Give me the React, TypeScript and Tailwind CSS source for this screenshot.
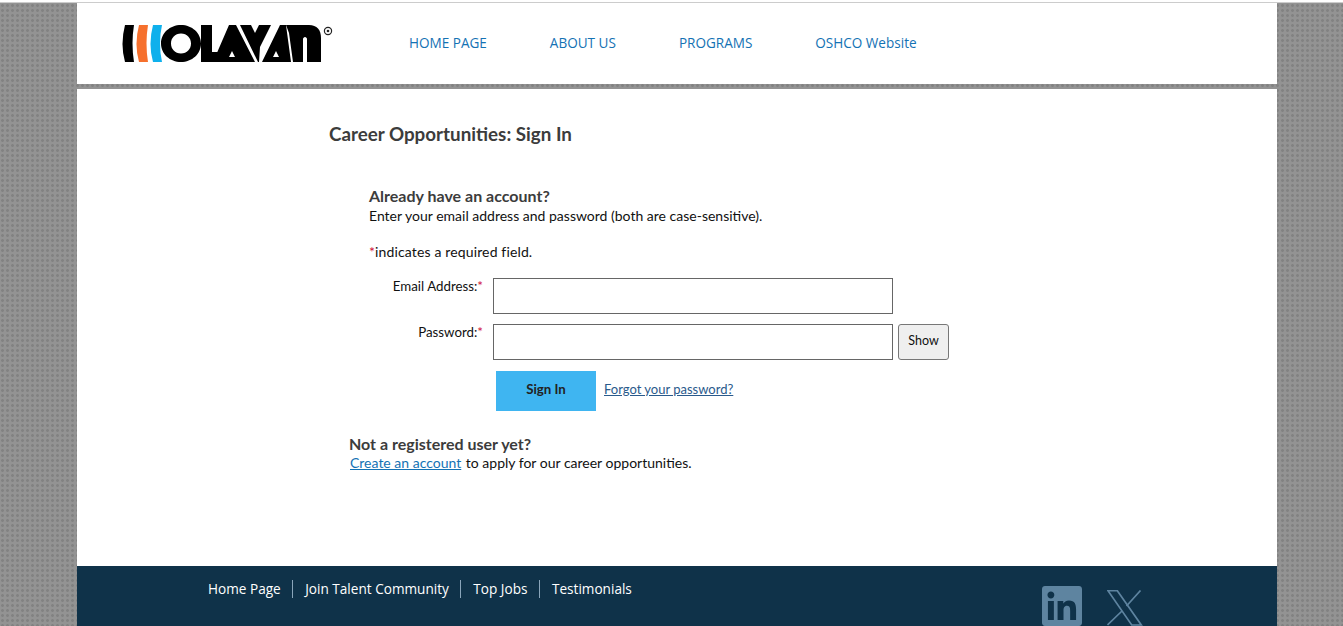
const pattern = "bg-[#939393] bg-[radial-gradient(#828282_1.2px,transparent_1.6px)] bg-[length:5px_5px]"

const navLinks = ["HOME PAGE", "ABOUT US", "PROGRAMS", "OSHCO Website"]
const footerLinks = ["Home Page", "Join Talent Community", "Top Jobs", "Testimonials"]

function Logo() {
  return (
    <svg width="215" height="40" viewBox="120 24 215 40" className="shrink-0">
      <path d="M125 25h9q-3 18 0 37h-9q-5-18 0-37z" fill="#000" />
      <path d="M139 25h9q-3 18 0 37h-9q-5-18 0-37z" fill="#f6702d" />
      <path d="M153 25h9q-4 18 0 37h-9q-5-18 0-37z" fill="#0fb0ec" />
      <path
        fillRule="evenodd"
        d="M181 25c11 0 20 8 20 18.500s-9 18.500-20 18.500-20-8-20-18.500 9-18.500 20-18.500zm0 8.500c-6 0-10 4.500-10 10s4 10 10 10 10-4.500 10-10-4-10-10-10z"
        fill="#000"
      />
      <path d="M201 25h11v27h12l-5 10h-18z" fill="#000" />
      <path fillRule="evenodd" d="M213 62l16-37h7l19 37zM229 57h6l-3-6z" fill="#000" />
      <path d="M240 25h11l4 8 4-8h12l-11 22-1 15h-1z" fill="#000" />
      <path fillRule="evenodd" d="M262 62l18-37h6l5 37zM273 57h6l-3-6z" fill="#000" />
      <path d="M286 25h23c8 0 12 5 12 13v24h-14v-23c0-1-1-2-2-2s-2 1-2 2v23h-10l-4-29z" fill="#000" />
      <circle cx="328" cy="31" r="3.600" fill="none" stroke="#222" strokeWidth="1.200" />
      <circle cx="328" cy="31" r="1.300" fill="#222" />
    </svg>
  )
}

function LinkedinIcon() {
  return (
    <svg width="40" height="40" viewBox="0 0 24 24" fill="#5e84a0">
      <path d="M20.447 20.452h-3.554v-5.569c0-1.328-.027-3.037-1.852-3.037-1.853 0-2.136 1.445-2.136 2.939v5.667H9.351V9h3.414v1.561h.046c.477-.9 1.637-1.85 3.37-1.85 3.601 0 4.267 2.37 4.267 5.455v6.286zM5.337 7.433c-1.144 0-2.063-.926-2.063-2.065 0-1.138.92-2.063 2.063-2.063 1.14 0 2.064.925 2.064 2.063 0 1.139-.925 2.065-2.064 2.065zm1.782 13.019H3.555V9h3.564v11.452zM22.225 0H1.771C.792 0 0 .774 0 1.729v20.542C0 23.227.792 24 1.771 24h20.451C23.2 24 24 23.227 24 22.271V1.729C24 .774 23.2 0 22.222 0h.003z" />
    </svg>
  )
}

function XIcon() {
  return (
    <svg width="36" height="36" viewBox="0 0 36 36" fill="none" stroke="#5e84a0" strokeWidth="1.700" className="mt-1">
      <path d="M1 .7h9.300l24 34.300h-9.600z" />
      <path d="M33.500.5L19.500 16M15 21L.5 35" />
    </svg>
  )
}

export default function App() {
  return (
    <div className={`h-screen overflow-hidden pt-[2px] bg-white font-['Noto_Sans',sans-serif]`}>
      <div className={`h-full border-t border-[#cccccc] ${pattern}`}>
        <div className="ml-[77px] w-[1200px]">
          <header className="h-[81px] bg-white flex items-center pl-[43px]">
            <Logo />
            <nav className="ml-[74px] flex gap-[63px] font-['Open_Sans',sans-serif] text-[13.550px] -mt-[1px] text-[#1472b4]">
              {navLinks.map((l) => (
                <a key={l} href="#">{l}</a>
              ))}
            </nav>
          </header>

          <main className="mt-[5px] h-[477px] bg-white pl-[252px] pt-[33px] text-[14px] text-[#111] font-['Lato',sans-serif]">
            <h1 className="text-[18.800px] font-bold leading-6 text-[#3c3c3c]">Career Opportunities: Sign In</h1>

            <div className="ml-[40px] mt-[40px]">
              <h2 className="text-[16px] font-bold leading-5 text-[#3c3c3c]">Already have an account?</h2>
              <p className="leading-5">Enter your email address and password (both are case-sensitive).</p>
              <p className="mt-4 leading-5 tracking-[0.01em]"><span className="text-[#d0103a]">*</span>indicates a required field.</p>
            </div>

            <div className="mt-[16px]">
              <div className="flex">
                <label className="w-[154px] text-right text-[13.300px] leading-[16px]">Email Address:<span className="text-[#d0103a]">*</span></label>
                <input className="ml-[10px] h-[36px] w-[400px] border border-[#666] bg-white" />
              </div>
              <div className="flex mt-[10px]">
                <label className="w-[154px] text-right text-[13.300px] leading-[16px]">Password:<span className="text-[#d0103a]">*</span></label>
                <input type="password" className="ml-[10px] h-[36px] w-[400px] border border-[#666] bg-white" />
                <button className="ml-[5px] w-[51px] h-[36px] rounded-[3px] border border-[#777] bg-[#efefef] text-[12.500px] pb-[2px]">Show</button>
              </div>
              <div className="flex items-center mt-[11px] ml-[167px]">
                <button className="w-[100px] h-[40px] bg-[#3fb5f1] text-[13.300px] font-bold text-[#222] pb-[2px]">Sign In</button>
                <a href="#" className="ml-[8px] -mt-[2px] underline text-[13px] text-[#2a5a8c]">Forgot your password?</a>
              </div>
            </div>

            <div className="ml-[20px] mt-[23px]">
              <h2 className="text-[16px] font-bold leading-[19px] text-[#3c3c3c]">Not a registered user yet?</h2>
              <p className="leading-5">
                <a href="#" className="ml-[1px] mr-[1px] underline text-[#1472b4]">Create an account</a> to apply for our career opportunities.
              </p>
            </div>
          </main>

          <footer className="h-[80px] bg-[#0f3249] flex items-start pl-[131px] font-['Open_Sans',sans-serif] text-[13.600px] text-white">
            <div className="flex mt-[14px]">
              {footerLinks.map((l, i) => (
                <a key={l} href="#" className={i > 0 ? "ml-[11.500px] pl-[12px] border-l border-[#8aa5ba] leading-[18px]" : "leading-[18px]"}>{l}</a>
              ))}
            </div>
            <div className="ml-auto mr-[134px] mt-[20px] flex gap-[25px]">
              <LinkedinIcon />
              <XIcon />
            </div>
          </footer>
        </div>
      </div>
    </div>
  )
}
